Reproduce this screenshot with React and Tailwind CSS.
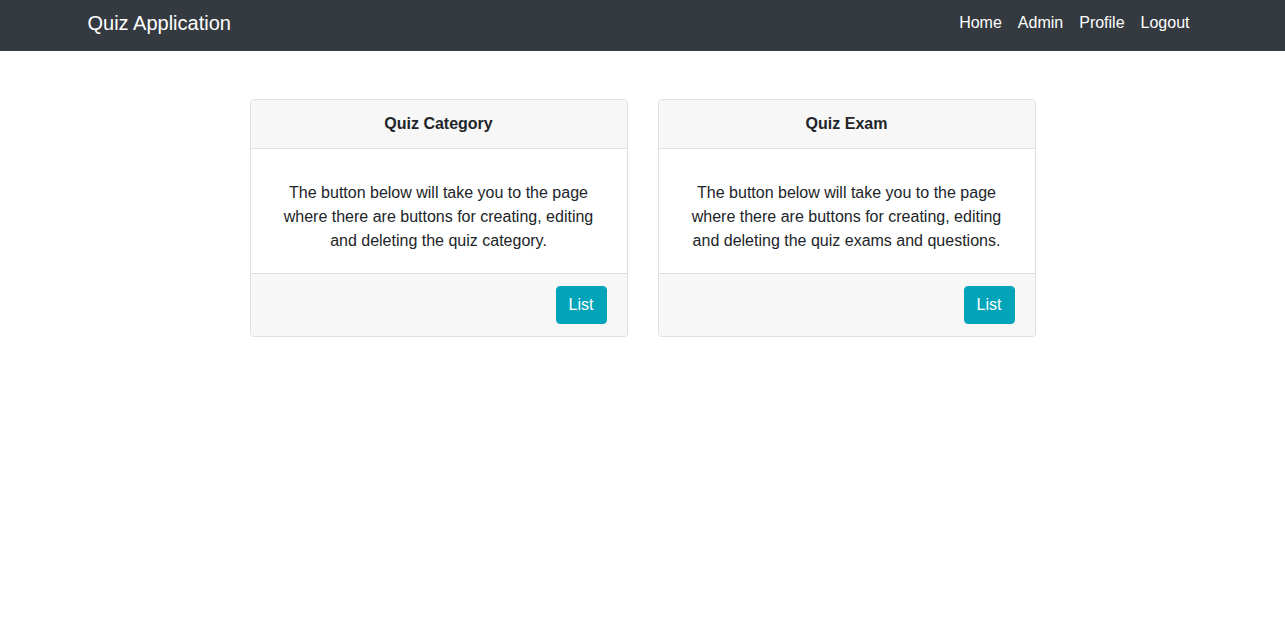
const cards = [
  {
    title: "Quiz Category",
    text: "The button below will take you to the page where there are buttons for creating, editing and deleting the quiz category.",
  },
  {
    title: "Quiz Exam",
    text: "The button below will take you to the page where there are buttons for creating, editing and deleting the quiz exams and questions.",
  },
];

const App = () => {
  return (
    <div className="min-h-screen bg-white font-['Liberation_Sans',Arial,sans-serif] text-[#212529]">
      {/* Navbar */}
      <nav className="h-[51px] bg-[#343a40]">
        <div className="mx-auto flex h-full w-[1140px] items-center justify-between px-[15px] pb-[5px]">
          <a href="#" className="text-[20px] leading-[30px] text-white">
            Quiz Application
          </a>
          <ul className="flex">
            {["Home", "Admin", "Profile", "Logout"].map((link) => (
              <li key={link}>
                <a href="#" className="block px-2 text-base leading-6 text-white">
                  {link}
                </a>
              </li>
            ))}
          </ul>
        </div>
      </nav>

      {/* Cards */}
      <div className="mt-12 flex justify-center gap-[30px]">
        {cards.map((card) => (
          <div
            key={card.title}
            className="w-[378px] overflow-hidden rounded border border-[#dfdfdf]"
          >
            <div className="border-b border-[#dfdfdf] bg-[#f7f7f7] py-3 text-center text-base leading-6 font-bold">
              {card.title}
            </div>
            <div className="px-[32px] pt-[32px] pb-[20px] text-center text-base leading-6">
              {card.text}
            </div>
            <div className="flex justify-end border-t border-[#dfdfdf] bg-[#f7f7f7] px-5 py-3">
              <button className="h-[38px] rounded border border-[#02a4b9] bg-[#02a4b9] px-3 text-base text-white">
                List
              </button>
            </div>
          </div>
        ))}
      </div>
    </div>
  );
};

export default App;
